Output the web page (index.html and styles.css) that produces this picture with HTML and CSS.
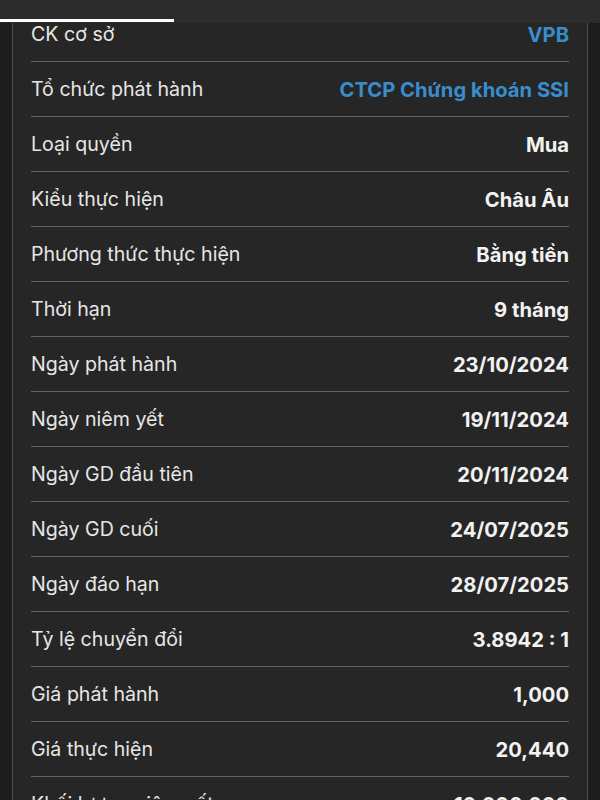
FILE: index.html
```html
<!DOCTYPE html>
<html lang="vi">
<head>
<meta charset="utf-8">
<link rel="stylesheet" href="styles.css">
</head>
<body>
<div class="screen">
  <div class="topbar"><div class="indicator"></div></div>
  <div class="card">
    <div class="row"><span class="label">CK cơ sở</span><span class="value link">VPB</span></div>
    <div class="row"><span class="label">Tổ chức phát hành</span><span class="value link">CTCP Chứng khoán SSI</span></div>
    <div class="row"><span class="label">Loại quyền</span><span class="value">Mua</span></div>
    <div class="row"><span class="label">Kiểu thực hiện</span><span class="value">Châu Âu</span></div>
    <div class="row"><span class="label">Phương thức thực hiện</span><span class="value">Bằng tiền</span></div>
    <div class="row"><span class="label">Thời hạn</span><span class="value">9 tháng</span></div>
    <div class="row"><span class="label">Ngày phát hành</span><span class="value">23/10/2024</span></div>
    <div class="row"><span class="label">Ngày niêm yết</span><span class="value">19/11/2024</span></div>
    <div class="row"><span class="label">Ngày GD đầu tiên</span><span class="value">20/11/2024</span></div>
    <div class="row"><span class="label">Ngày GD cuối</span><span class="value">24/07/2025</span></div>
    <div class="row"><span class="label">Ngày đáo hạn</span><span class="value">28/07/2025</span></div>
    <div class="row"><span class="label">Tỷ lệ chuyển đổi</span><span class="value">3.8942 : 1</span></div>
    <div class="row"><span class="label">Giá phát hành</span><span class="value">1,000</span></div>
    <div class="row"><span class="label">Giá thực hiện</span><span class="value">20,440</span></div>
    <div class="row"><span class="label">Khối lượng niêm yết</span><span class="value">10,000,000</span></div>
  </div>
</div>
</body>
</html>
```

FILE: styles.css
```css
html, body {
  margin: 0;
  padding: 0;
  background: #1d1d1d;
}
.screen {
  position: relative;
  width: 600px;
  height: 800px;
  overflow: hidden;
  background: #1d1d1d;
  font-family: Inter, "Noto Sans", sans-serif;
}
.topbar {
  position: absolute;
  top: 0;
  left: 0;
  right: 0;
  height: 23px;
  background: #2c2c2c;
  z-index: 2;
}
.indicator {
  position: absolute;
  left: 0;
  bottom: 1px;
  width: 174px;
  height: 3px;
  background: #ffffff;
}
.card {
  margin: 0 12px;
  padding-top: 7px;
  background: #262626;
  border-left: 1px solid #4e4e4e;
  border-right: 1px solid #4e4e4e;
}
.row {
  display: flex;
  justify-content: space-between;
  align-items: center;
  height: 54px;
  margin: 0 18px;
  border-bottom: 1px solid #626262;
}
.label {
  color: #e6e6e6;
  font-weight: 400;
  font-size: 19.6px;
}
.value {
  color: #f2f2f2;
  font-weight: 700;
  font-size: 20.2px;
}
.value.link {
  color: #3a8dcc;
}
```
